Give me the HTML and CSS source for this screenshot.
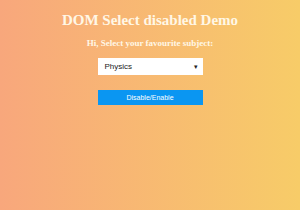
FILE: index.html
```html
<!DOCTYPE html>
<html lang="en">

<head>
  <meta charset="UTF-8" />
  <title>DOM Select disabled Demo</title>
  <link rel="stylesheet" href="styles.css">
</head>

<body>
  <div class="pagina">
    <h1 class="titulo">DOM Select disabled Demo</h1>
    <h3 class="subtitulo">Hi, Select your favourite subject:</h3>
    <div class="caixa-select">
      <span>Physics</span>
      <span class="seta">&#9662;</span>
    </div>
    <button class="botao">Disable/Enable</button>
  </div>
</body>

</html>
```

FILE: styles.css
```css
body,
html {
  margin: 0;
  padding: 0;
  height: 100%;
}

.pagina {
  height: 100%;
  background: linear-gradient(to right, #f8a77c, #f7cc68);
  display: flex;
  flex-direction: column;
  align-items: center;
  font-family: 'Liberation Serif', serif;
  color: #fff7e6;
  padding-top: 11px;
  box-sizing: border-box;
}

.titulo {
  margin: 0;
  font-size: 15px;
  line-height: 18px;
}

.subtitulo {
  margin: 9px 0 0;
  font-size: 9px;
  line-height: 11px;
}

.caixa-select {
  margin-top: 9px;
  width: 105px;
  height: 17px;
  background: #fff;
  box-sizing: border-box;
  padding: 0 5px 0 7px;
  display: flex;
  align-items: center;
  justify-content: space-between;
  font-family: 'Liberation Sans', sans-serif;
  font-size: 8px;
  color: #222;
}

.seta {
  font-size: 7px;
}

.botao {
  margin-top: 15px;
  width: 105px;
  height: 15px;
  border: none;
  background: #0a96f2;
  color: #fff;
  font-family: 'Liberation Sans', sans-serif;
  font-size: 7px;
  padding: 0;
}
```
